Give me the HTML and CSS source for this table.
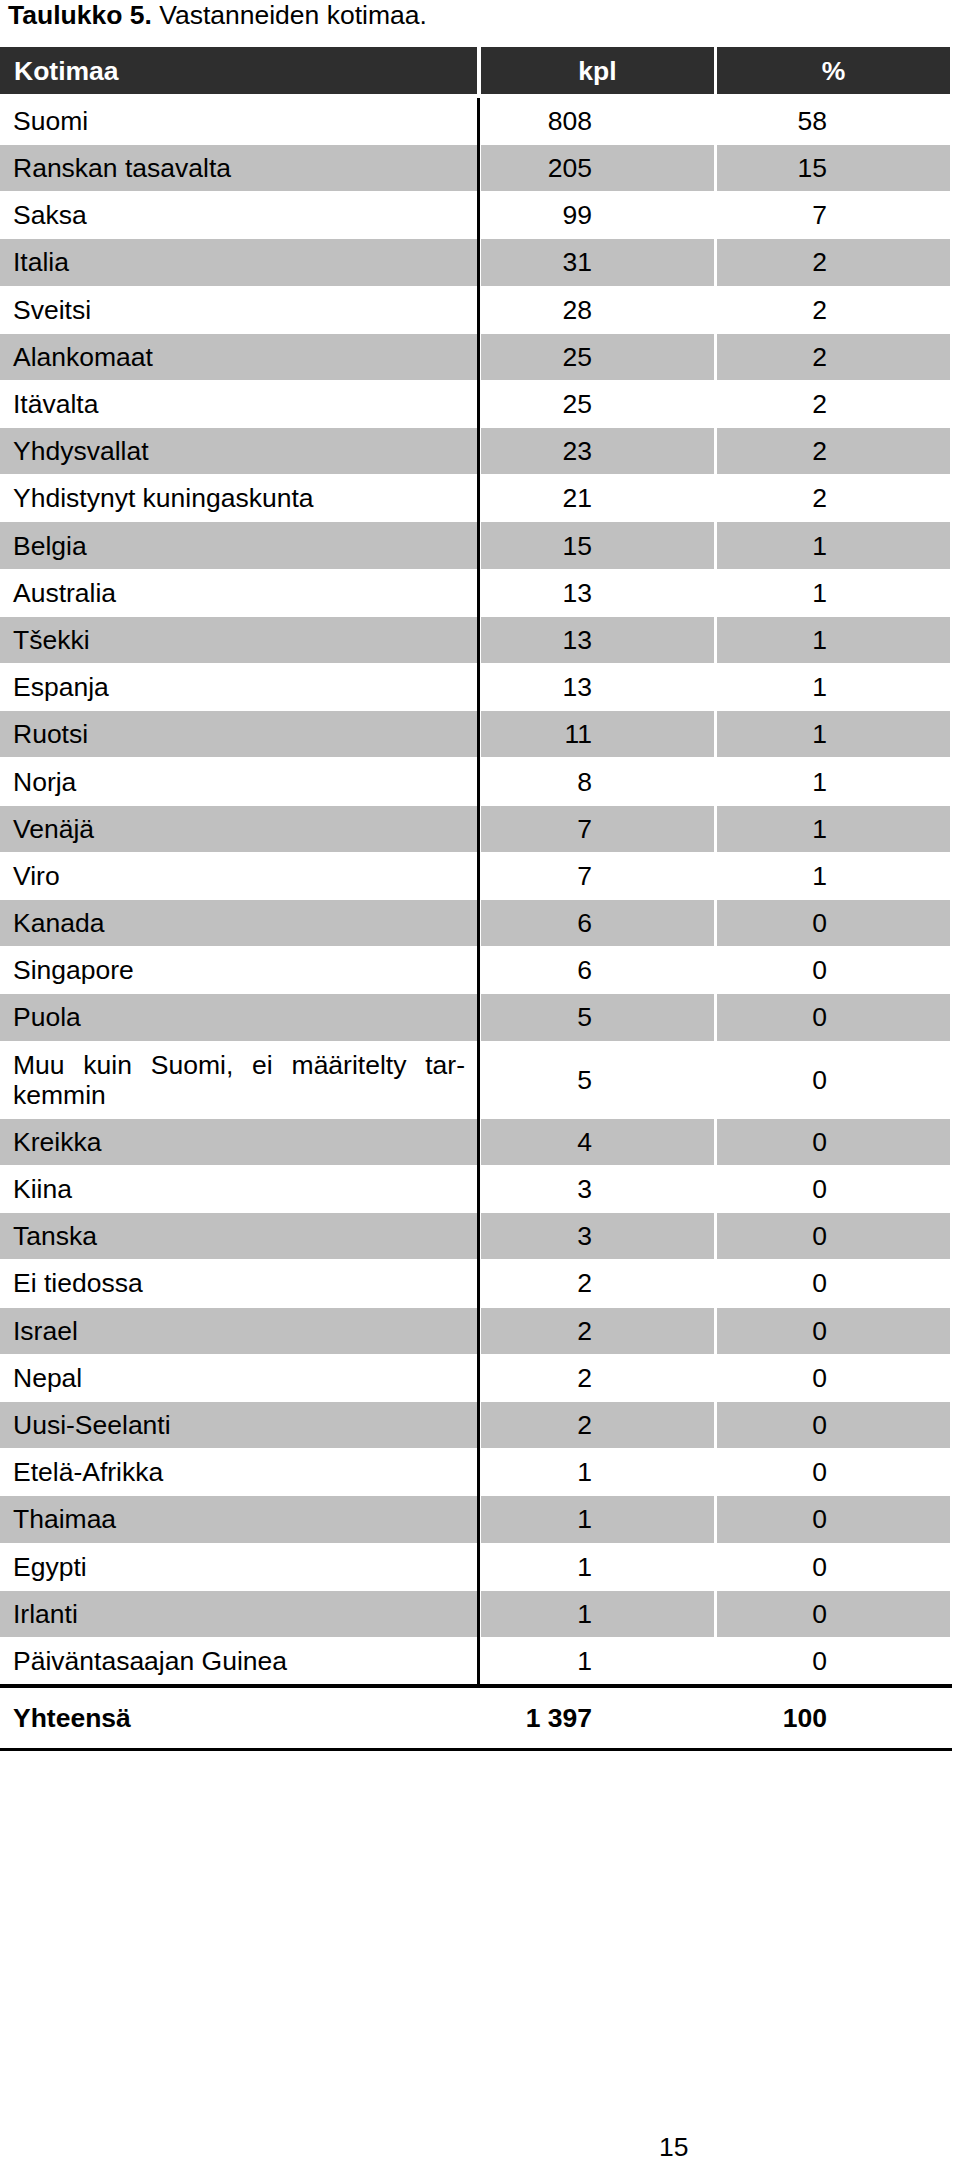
FILE: index.html
```html
<!DOCTYPE html>
<html lang="fi">
<head>
<meta charset="utf-8">
<title>Taulukko 5</title>
<link rel="stylesheet" href="styles.css">
</head>
<body>
<div class="page">
  <p class="caption"><b>Taulukko 5.</b> Vastanneiden kotimaa.</p>

  <div class="table">
    <div class="row head">
      <div class="c1">Kotimaa</div>
      <div class="c2">kpl</div>
      <div class="c3">%</div>
    </div>

    <div class="tbody">
      <div class="row"><div class="c1">Suomi</div><div class="c2">808</div><div class="c3">58</div></div>
      <div class="row alt"><div class="c1">Ranskan tasavalta</div><div class="c2">205</div><div class="c3">15</div></div>
      <div class="row"><div class="c1">Saksa</div><div class="c2">99</div><div class="c3">7</div></div>
      <div class="row alt"><div class="c1">Italia</div><div class="c2">31</div><div class="c3">2</div></div>
      <div class="row"><div class="c1">Sveitsi</div><div class="c2">28</div><div class="c3">2</div></div>
      <div class="row alt"><div class="c1">Alankomaat</div><div class="c2">25</div><div class="c3">2</div></div>
      <div class="row"><div class="c1">Itävalta</div><div class="c2">25</div><div class="c3">2</div></div>
      <div class="row alt"><div class="c1">Yhdysvallat</div><div class="c2">23</div><div class="c3">2</div></div>
      <div class="row"><div class="c1">Yhdistynyt kuningaskunta</div><div class="c2">21</div><div class="c3">2</div></div>
      <div class="row alt"><div class="c1">Belgia</div><div class="c2">15</div><div class="c3">1</div></div>
      <div class="row"><div class="c1">Australia</div><div class="c2">13</div><div class="c3">1</div></div>
      <div class="row alt"><div class="c1">Tšekki</div><div class="c2">13</div><div class="c3">1</div></div>
      <div class="row"><div class="c1">Espanja</div><div class="c2">13</div><div class="c3">1</div></div>
      <div class="row alt"><div class="c1">Ruotsi</div><div class="c2">11</div><div class="c3">1</div></div>
      <div class="row"><div class="c1">Norja</div><div class="c2">8</div><div class="c3">1</div></div>
      <div class="row alt"><div class="c1">Venäjä</div><div class="c2">7</div><div class="c3">1</div></div>
      <div class="row"><div class="c1">Viro</div><div class="c2">7</div><div class="c3">1</div></div>
      <div class="row alt"><div class="c1">Kanada</div><div class="c2">6</div><div class="c3">0</div></div>
      <div class="row"><div class="c1">Singapore</div><div class="c2">6</div><div class="c3">0</div></div>
      <div class="row alt"><div class="c1">Puola</div><div class="c2">5</div><div class="c3">0</div></div>
      <div class="row tall"><div class="c1 wrap"><span class="jline">Muu kuin Suomi, ei määritelty tar-</span><span class="lline">kemmin</span></div><div class="c2">5</div><div class="c3">0</div></div>
      <div class="row alt"><div class="c1">Kreikka</div><div class="c2">4</div><div class="c3">0</div></div>
      <div class="row"><div class="c1">Kiina</div><div class="c2">3</div><div class="c3">0</div></div>
      <div class="row alt"><div class="c1">Tanska</div><div class="c2">3</div><div class="c3">0</div></div>
      <div class="row"><div class="c1">Ei tiedossa</div><div class="c2">2</div><div class="c3">0</div></div>
      <div class="row alt"><div class="c1">Israel</div><div class="c2">2</div><div class="c3">0</div></div>
      <div class="row"><div class="c1">Nepal</div><div class="c2">2</div><div class="c3">0</div></div>
      <div class="row alt"><div class="c1">Uusi-Seelanti</div><div class="c2">2</div><div class="c3">0</div></div>
      <div class="row"><div class="c1">Etelä-Afrikka</div><div class="c2">1</div><div class="c3">0</div></div>
      <div class="row alt"><div class="c1">Thaimaa</div><div class="c2">1</div><div class="c3">0</div></div>
      <div class="row"><div class="c1">Egypti</div><div class="c2">1</div><div class="c3">0</div></div>
      <div class="row alt"><div class="c1">Irlanti</div><div class="c2">1</div><div class="c3">0</div></div>
      <div class="row"><div class="c1">Päiväntasaajan Guinea</div><div class="c2">1</div><div class="c3">0</div></div>
    </div>

    <div class="row total">
      <div class="c1">Yhteensä</div>
      <div class="c2">1 397</div>
      <div class="c3">100</div>
    </div>
  </div>

  <p class="pagenum">15</p>
</div>
</body>
</html>
```

FILE: styles.css
```css
html, body {
  margin: 0;
  padding: 0;
  background: #ffffff;
}

.page {
  font-family: "Liberation Sans", Arial, sans-serif;
  font-size: 26.5px;
  color: #000000;
  width: 960px;
}

.caption {
  margin: 0;
  padding-left: 8px;
  line-height: 30px;
  height: 47.3px;
}

.table {
  width: 952px;
}

.row {
  display: grid;
  grid-template-columns: 477px 4px 233px 3px 233px;
  height: 46.2px;
  line-height: 30px;
}

.row > div {
  display: flex;
  align-items: center;
}

.row > .c1 {
  grid-column: 1;
  padding-left: 13px;
}

.row > .c2 {
  grid-column: 3;
  justify-content: flex-end;
  padding-right: 122px;
}

.row > .c3 {
  grid-column: 5;
  justify-content: flex-end;
  padding-right: 123px;
}

.head {
  height: 46.7px;
  font-weight: bold;
  color: #ffffff;
  margin-bottom: 3.8px;
}

.head > div {
  background: #2e2e2e;
}

.head > .c1 {
  padding-left: 14px;
}

.head > .c2,
.head > .c3 {
  justify-content: center;
  padding-right: 0;
}

.tbody {
  display: flex;
  flex-direction: column;
  gap: 1px;
  background: linear-gradient(#000000, #000000) no-repeat 477px 0 / 3px 100%;
}

.alt > div {
  background: #c0c0c0;
}

.tall {
  height: 76.3px;
}

.wrap {
  flex-direction: column;
  align-items: stretch !important;
  justify-content: center;
  padding-right: 12px;
}

.jline {
  display: block;
  text-align: justify;
  text-align-last: justify;
}

.lline {
  display: block;
  text-align: left;
}

.total {
  height: 60px;
  font-weight: bold;
  border-top: 4px solid #000000;
  border-bottom: 3px solid #000000;
}

.pagenum {
  margin: 386px 0 0 0;
  padding-left: 659px;
  line-height: 20px;
}
```
